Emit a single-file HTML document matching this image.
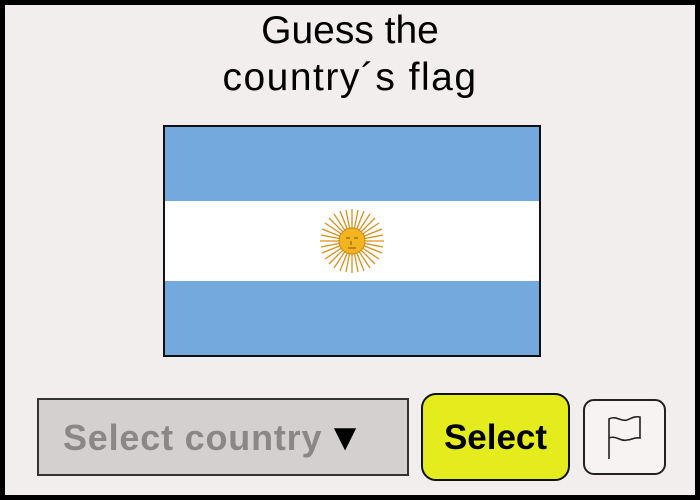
<!DOCTYPE html>
<html><head><style>
body{margin:0;width:700px;height:500px;background:#000;overflow:hidden;font-family:"Liberation Sans",sans-serif}
.f{position:absolute;left:5px;top:5px;width:690px;height:490px;background:#f2eeed}
.t{position:absolute;left:0;width:700px;text-align:center;font-size:39px;color:#000;line-height:40px}
.flag{position:absolute;left:163px;top:125px;width:374px;height:228px;border:2px solid #111;background:#74a9dd}
.w{position:absolute;left:0;top:74px;width:374px;height:80px;background:#fff}
.dd{position:absolute;left:37px;top:398px;border:2px solid #333;background:#d3d0cf;color:#8a8787;font-size:36px;font-weight:bold;line-height:76px;padding-left:24px;box-sizing:border-box;width:372px;height:78px;white-space:nowrap;letter-spacing:0.8px}
.dd b{color:#000;font-size:38px;margin-left:4px}
.sel{position:absolute;left:421px;top:393px;width:149px;height:88px;box-sizing:border-box;border:2px solid #111;border-radius:15px;background:#e5ec1d;font-size:35px;font-weight:bold;text-align:center;line-height:86px}
.fb{position:absolute;left:583px;top:399px;width:83px;height:76px;box-sizing:border-box;border:2px solid #222;border-radius:11px;background:#f6f3f2}
</style></head><body>
<div class="f"></div>
<div class="t" style="top:11px">Guess the</div>
<div class="t" style="top:58px;letter-spacing:1.5px">country´s flag</div>
<div class="flag"><div class="w"></div>
<svg style="position:absolute;left:154px;top:81px" width="66" height="66" viewBox="-33 -33 66 66">
<g stroke="#d9901a" stroke-width="1.3">
<line x1="0" y1="-32" x2="0" y2="32"/><line x1="-32" y1="0" x2="32" y2="0"/>
<line x1="-23" y1="-23" x2="23" y2="23"/><line x1="23" y1="-23" x2="-23" y2="23"/>
<line x1="-12" y1="-30" x2="12" y2="30"/><line x1="12" y1="-30" x2="-12" y2="30"/>
<line x1="-30" y1="-12" x2="30" y2="12"/><line x1="30" y1="-12" x2="-30" y2="12"/>
<line x1="-6" y1="-31" x2="6" y2="31"/><line x1="6" y1="-31" x2="-6" y2="31"/>
<line x1="-31" y1="-6" x2="31" y2="6"/><line x1="31" y1="-6" x2="-31" y2="6"/>
<line x1="-18" y1="-27" x2="18" y2="27"/><line x1="18" y1="-27" x2="-18" y2="27"/>
<line x1="-27" y1="-18" x2="27" y2="18"/><line x1="27" y1="-18" x2="-27" y2="18"/>
</g>
<circle r="13" fill="#f3b51e" stroke="#c9841a" stroke-width="1"/>
<path d="M-6,-3h4M2,-3h4M-1,0v4M-4,7h8" stroke="#a0601a" stroke-width="1.2" fill="none"/>
</svg></div>
<div class="dd">Select country<b>▼</b></div>
<div class="sel">Select</div>
<div class="fb"><svg width="79" height="72" viewBox="0 0 79 72"><path d="M24,58V18C31,14 36,21 42,19C47,17 50,15 55,16V37C49,36 47,39 42,39C36,41 31,34 24,37" fill="none" stroke="#222" stroke-width="1.6"/></svg></div>
</body></html>
